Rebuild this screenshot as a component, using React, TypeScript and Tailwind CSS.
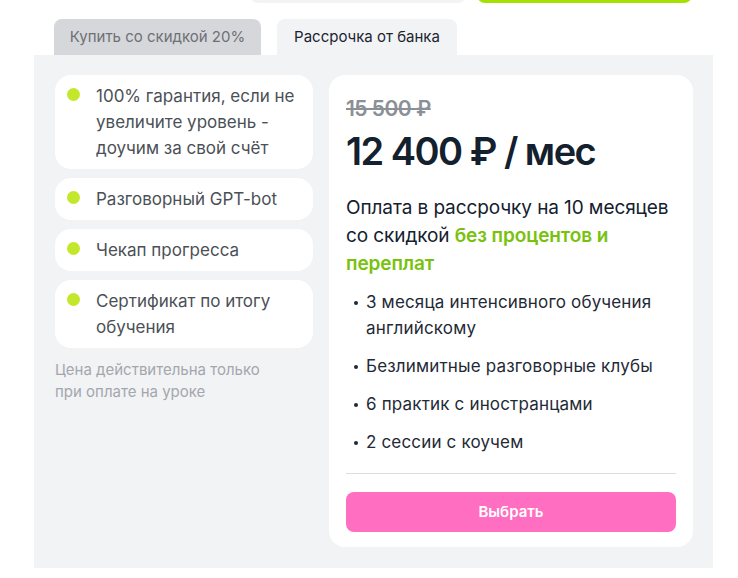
const FEATURES = [
  "100% гарантия, если не увеличите уровень - доучим за свой счёт",
  "Разговорный GPT-bot",
  "Чекап прогресса",
  "Сертификат по итогу обучения",
];

const INCLUDES = [
  "3 месяца интенсивного обучения английскому",
  "Безлимитные разговорные клубы",
  "6 практик с иностранцами",
  "2 сессии с коучем",
];

export default function App() {
  return (
    <div className="w-[738px] h-[578px] bg-white overflow-hidden font-['Inter',sans-serif]">
      {/* buttons of the block above, cut off */}
      <div className="flex items-end h-[3px] overflow-hidden pl-[250px] gap-[11px]">
        <div className="w-[216px] h-[44px] shrink-0 rounded-lg bg-[#f2f3f5]" />
        <div className="w-[215px] h-[44px] shrink-0 rounded-lg bg-[#a5e100]" />
      </div>

      {/* Tabs */}
      <div className="flex items-end gap-4 mt-4 pl-[54px]">
        <button className="w-[207px] h-9 rounded-t-lg bg-[#d6d7da] text-[#6d7075] text-[15px]">
          Купить со скидкой 20%
        </button>
        <button className="w-[180px] h-9 rounded-t-lg bg-[#f2f3f5] text-[#1b2430] text-[15px]">
          Рассрочка от банка
        </button>
      </div>

      {/* Panel */}
      <div className="ml-[34px] w-[679px] h-[513px] bg-[#f2f3f5] flex gap-4 pl-[21px] pr-5 pt-5">
        <div className="w-[258px] flex flex-col">
          <div className="flex flex-col gap-[9px]">
            {FEATURES.map((f) => (
              <div key={f} className="bg-white rounded-2xl pl-3 pr-4 py-2 flex items-start gap-4">
                <span className="w-[13px] h-[13px] rounded-full bg-[#c3e82b] shrink-0 mt-[5px]" />
                <span className="text-[17px] leading-[26px] text-[#4b5057]">{f}</span>
              </div>
            ))}
          </div>
          <p className="mt-[11px] w-[215px] text-[15px] leading-[22px] text-[#a3a7ad]">
            Цена действительна только при оплате на уроке
          </p>
        </div>

        <div className="w-[364px] h-[472px] bg-white rounded-2xl px-[17px] pt-5 flex flex-col">
          <div className="text-[21px] leading-[28px] font-semibold text-[#8b9096] line-through tracking-tight">
            15 500 ₽
          </div>
          <div className="mt-[4px] text-[38px] leading-[48px] font-semibold text-[#13202e] tracking-[-0.04em]">
            12 400 ₽ / мес
          </div>
          <p className="mt-[19px] text-[19px] leading-[28px] text-[#13202e] tracking-[-0.005em]">
            Оплата в рассрочку на 10 месяцев со скидкой{" "}
            <span className="font-semibold text-[#78c20e]">без процентов и переплат</span>
          </p>
          <ul className="mt-[11px] flex flex-col gap-3">
            {INCLUDES.map((t) => (
              <li key={t} className="flex items-start gap-[8px] pl-[8px] text-[17px] leading-[26px] text-[#1f2a36] tracking-[0.01em]">
                <span className="shrink-0 w-[4px] h-[4px] rounded-full bg-[#1f2a36] mt-[12px]" />
                <span>{t}</span>
              </li>
            ))}
          </ul>
          <div className="mt-auto mb-[18px] border-t border-[#dcdde0]" />
          <button className="mb-[15px] h-10 rounded-lg bg-[#ff6ec0] text-white text-[15px] font-semibold">
            Выбрать
          </button>
        </div>
      </div>
    </div>
  );
}
